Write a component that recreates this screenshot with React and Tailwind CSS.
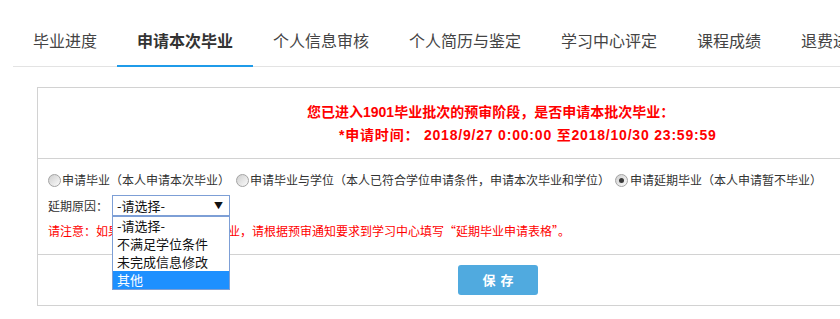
const tabs = ['毕业进度', '申请本次毕业', '个人信息审核', '个人简历与鉴定', '学习中心评定', '课程成绩', '退费进度']

function Radio({ checked }) {
  return (
    <span className="inline-flex items-center justify-center w-[13px] h-[13px] rounded-full border border-[#a3a3a3] bg-gradient-to-br from-[#cfcfcf] to-[#fbfbfb] shrink-0">
      {checked && <span className="w-[5px] h-[5px] rounded-full bg-[#3a3a3a]" />}
    </span>
  )
}

export default function App() {
  const options = ['-请选择-', '不满足学位条件', '未完成信息修改', '其他']
  return (
    <div className="w-[840px] h-[319px] overflow-hidden bg-white font-['Noto_Sans_CJK_SC',sans-serif] text-[#333]">
      {/* 顶部标签 */}
      <div className="ml-[13px] w-[1000px] flex border-b border-[#e3e3e3]">
        {tabs.map((t, i) => (
          <div
            key={t}
            className={
              'h-[67px] -mb-px px-[20px] pt-[29px] text-[16px] leading-[22px] whitespace-nowrap border-b-2 ' +
              (i === 1 ? 'border-[#1f9be9] font-bold text-[#333]' : 'border-transparent text-[#444]')
            }
          >
            {t}
          </div>
        ))}
      </div>

      <div className="ml-[37px] mt-[20px] w-[900px] border border-[#d2d2d2]">
        {/* 提示 */}
        <div className="h-[71px] border-b border-[#d2d2d2] pt-[13px] font-['Liberation_Sans','Noto_Sans_CJK_SC',sans-serif] font-bold text-[14px] leading-[23px] text-[#ff0000]">
          <div className="pl-[269px] whitespace-nowrap">您已进入1901毕业批次的预审阶段，是否申请本批次毕业：</div>
          <div className="pl-[301px] whitespace-nowrap tracking-[0.8px]">*申请时间： 2018/9/27 0:00:00 至2018/10/30 23:59:59</div>
        </div>

        {/* 选项 */}
        <div className="h-[96px] border-b border-[#d2d2d2] pl-[10px] pt-[11px] text-[12px]">
          <div className="flex items-center h-[20px] whitespace-nowrap">
            <Radio />
            <span className="ml-px">申请毕业（本人申请本次毕业）</span>
            <span className="w-[6px]" />
            <Radio />
            <span className="ml-px">申请毕业与学位（本人已符合学位申请条件，申请本次毕业和学位）</span>
            <span className="w-[5px]" />
            <Radio checked />
            <span className="ml-[2px]">申请延期毕业（本人申请暂不毕业）</span>
          </div>
          <div className="flex items-center mt-[5px] h-[21px]">
            <span className="w-[64px]">延期原因：</span>
            <div className="relative">
              <div className="w-[118px] h-[21px] border border-[#7d9fd6] flex items-center justify-between pl-[4px] pr-[6px] text-[13px] leading-[18px] text-[#111] bg-white">
                <span>-请选择-</span>
                <span className="text-[9px]">▼</span>
              </div>
              <div className="absolute left-0 top-[21px] w-[118px] border border-[#7d9fd6] bg-white z-10 text-[13px] text-[#111]">
                {options.map((o, i) => (
                  <div
                    key={o}
                    className={'h-[18px] leading-[18px] pl-[4px] ' + (i === 3 ? 'bg-[#1e90ff] text-white' : '')}
                  >
                    {o}
                  </div>
                ))}
              </div>
            </div>
          </div>
          <div className="mt-[6px] leading-[18px] text-[#ff0000] whitespace-nowrap">
            请注意：如果您本批次申请延期毕业，请根据预审通知要求到学习中心填写“延期毕业申请表格”。
          </div>
        </div>

        {/* 保存 */}
        <div className="h-[50px] py-[10px] pl-[420px]">
          <button className="w-[80px] h-[30px] rounded-[3px] bg-[#50aadf] text-white text-[13px] font-bold tracking-[5px] pl-[5px]">
            保存
          </button>
        </div>
      </div>
    </div>
  )
}
